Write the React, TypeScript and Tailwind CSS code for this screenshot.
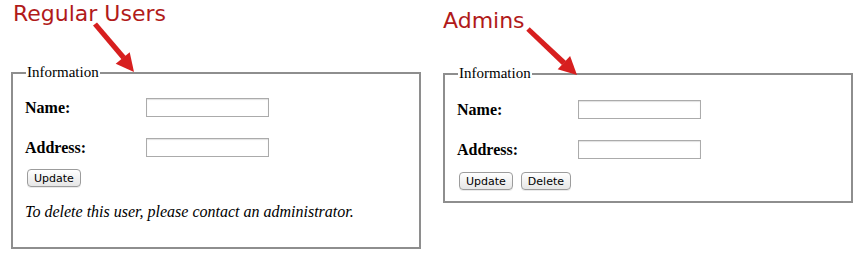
import React from "react";

const serif = { fontFamily: '"Liberation Serif", "Times New Roman", serif' };

function Arrow({ d, head }: { d: string; head: string }) {
  return (
    <svg className="absolute left-0 top-0 pointer-events-none" width="866" height="265">
      <polygon points={d} fill="#d71f1f" />
      <polygon points={head} fill="#d71f1f" />
    </svg>
  );
}

function Row({ label, first }: { label: string; first?: boolean }) {
  return (
    <div className={`flex items-center h-[19px] ${first ? "" : "mt-[21px]"}`}>
      <span className="w-[121px] text-[16px] font-bold text-black" style={serif}>
        {label}
      </span>
      <input
        type="text"
        className="w-[123px] h-[19px] border border-[#ababab] bg-white shadow-[inset_0_1px_1px_rgba(0,0,0,0.12)] outline-none"
      />
    </div>
  );
}

function Btn({ children }: { children: React.ReactNode }) {
  return (
    <button
      className="h-[18px] px-[6px] rounded-[4px] border border-[#9c9c9c] bg-gradient-to-b from-white to-[#e6e6e6] text-[11px] leading-none text-black shadow-[0_1px_0_rgba(0,0,0,0.08)]"
      style={{ fontFamily: '"DejaVu Sans", "Lucida Grande", sans-serif' }}
    >
      {children}
    </button>
  );
}

export default function App() {
  return (
    <div className="relative w-[866px] h-[265px] bg-white overflow-hidden">
      <div className="flex pl-[11px] gap-[22px]">
        {/* regular users */}
        <div className="w-[410px]">
          <h2
            className="ml-[2px] text-[22px] leading-[28px] text-[#b11a1a]"
            style={{ fontFamily: '"DejaVu Sans", sans-serif' }}
          >
            Regular Users
          </h2>
          <fieldset className="mt-[36px] border-2 border-[#8e8e8e] pl-[12px] pr-[12px] pb-[26px]">
            <legend className="ml-[1px] px-[1px] text-[15px] leading-[17px] text-black" style={serif}>
              Information
            </legend>
            <div className="mt-[17px]">
              <Row label="Name:" first />
              <Row label="Address:" />
            </div>
            <div className="mt-[12px] ml-[2px] flex gap-[8px]">
              <Btn>Update</Btn>
            </div>
            <p className="mt-[16px] text-[16px] leading-[18px] italic text-black" style={serif}>
              To delete this user, please contact an administrator.
            </p>
          </fieldset>
        </div>

        {/* admins */}
        <div className="w-[410px] pt-[7px]">
          <h2
            className="text-[22px] leading-[28px] text-[#b11a1a]"
            style={{ fontFamily: '"DejaVu Sans", sans-serif' }}
          >
            Admins
          </h2>
          <fieldset className="mt-[30px] border-2 border-[#8e8e8e] pl-[12px] pr-[12px] pb-[11px]">
            <legend className="ml-[1px] px-[1px] text-[15px] leading-[17px] text-black" style={serif}>
              Information
            </legend>
            <div className="mt-[18px]">
              <Row label="Name:" first />
              <Row label="Address:" />
            </div>
            <div className="mt-[13px] ml-[2px] flex gap-[8px]">
              <Btn>Update</Btn>
              <Btn>Delete</Btn>
            </div>
          </fieldset>
        </div>
      </div>

      <Arrow
        d="93,25.5 97,22.5 125.7,56 121.7,59.5"
        head="134,72 129.7,52.3 115.7,63.7"
      />
      <Arrow
        d="526.3,30.7 529.7,27.3 566,61 562,65"
        head="577,75 570.1,56 557.7,69.2"
      />
    </div>
  );
}
